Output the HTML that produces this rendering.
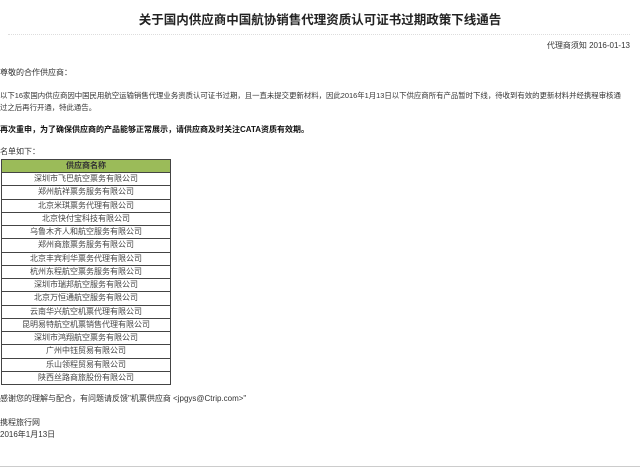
<!DOCTYPE html>
<html><head><meta charset="utf-8"><style>
body{margin:0;width:640px;height:469px;background:#fff;font-family:"Liberation Sans","Noto Sans CJK SC",sans-serif;color:#333;font-size:8px;position:relative;overflow:hidden}
.a{position:absolute;white-space:nowrap;line-height:10px}
h1{position:absolute;left:0;width:640px;top:12px;margin:0;text-align:center;font-size:12.5px;font-weight:bold;color:#222;line-height:16px}
.dots{position:absolute;left:8px;width:622px;top:34px;border-top:1px dotted #ddd}
table{position:absolute;left:1px;top:159px;border-collapse:collapse;width:170px}
td{border:1px solid #444;text-align:center;font-size:8px;color:#444;height:12.25px;padding:0;line-height:10px}
th{border:1px solid #444;background:#9bbb59;font-size:8px;color:#333;height:12px;padding:0;line-height:10px}
.bl{position:absolute;left:0;width:640px;top:466px;border-top:1px solid #ccc}
</style></head><body>
<h1>关于国内供应商中国航协销售代理资质认可证书过期政策下线通告</h1>
<div class="dots"></div>
<div class="a" style="right:10px;top:41px">代理商须知 2016-01-13</div>
<div class="a" style="left:0;top:68px">尊敬的合作供应商：</div>
<div class="a" style="left:0;top:90px;line-height:12px;font-size:7.4px">以下16家国内供应商因中国民用航空运输销售代理业务资质认可证书过期，且一直未提交更新材料，因此2016年1月13日以下供应商所有产品暂时下线，待收到有效的更新材料并经携程审核通<br>过之后再行开通，特此通告。</div>
<div class="a" style="left:0;top:125px;font-weight:bold;color:#111">再次重申，为了确保供应商的产品能够正常展示，请供应商及时关注CATA资质有效期。</div>
<div class="a" style="left:0;top:147px">名单如下：</div>
<table>
<tr><th>供应商名称</th></tr>
<tr><td>深圳市飞巴航空票务有限公司</td></tr>
<tr><td>郑州航祥票务服务有限公司</td></tr>
<tr><td>北京米琪票务代理有限公司</td></tr>
<tr><td>北京快付宝科技有限公司</td></tr>
<tr><td>乌鲁木齐人和航空服务有限公司</td></tr>
<tr><td>郑州商旅票务服务有限公司</td></tr>
<tr><td>北京丰宾利华票务代理有限公司</td></tr>
<tr><td>杭州东程航空票务服务有限公司</td></tr>
<tr><td>深圳市瑞邦航空服务有限公司</td></tr>
<tr><td>北京万恒通航空服务有限公司</td></tr>
<tr><td>云南华兴航空机票代理有限公司</td></tr>
<tr><td>昆明易特航空机票销售代理有限公司</td></tr>
<tr><td>深圳市鸿翔航空票务有限公司</td></tr>
<tr><td>广州中钰贸易有限公司</td></tr>
<tr><td>乐山领程贸易有限公司</td></tr>
<tr><td>陕西丝路商旅股份有限公司</td></tr>
</table>
<div class="a" style="left:0;top:394px">感谢您的理解与配合，有问题请反馈"机票供应商 &lt;jpgys@Ctrip.com&gt;"</div>
<div class="a" style="left:0;top:418px">携程旅行网</div>
<div class="a" style="left:0;top:430px">2016年1月13日</div>
<div class="bl"></div>
</body></html>
